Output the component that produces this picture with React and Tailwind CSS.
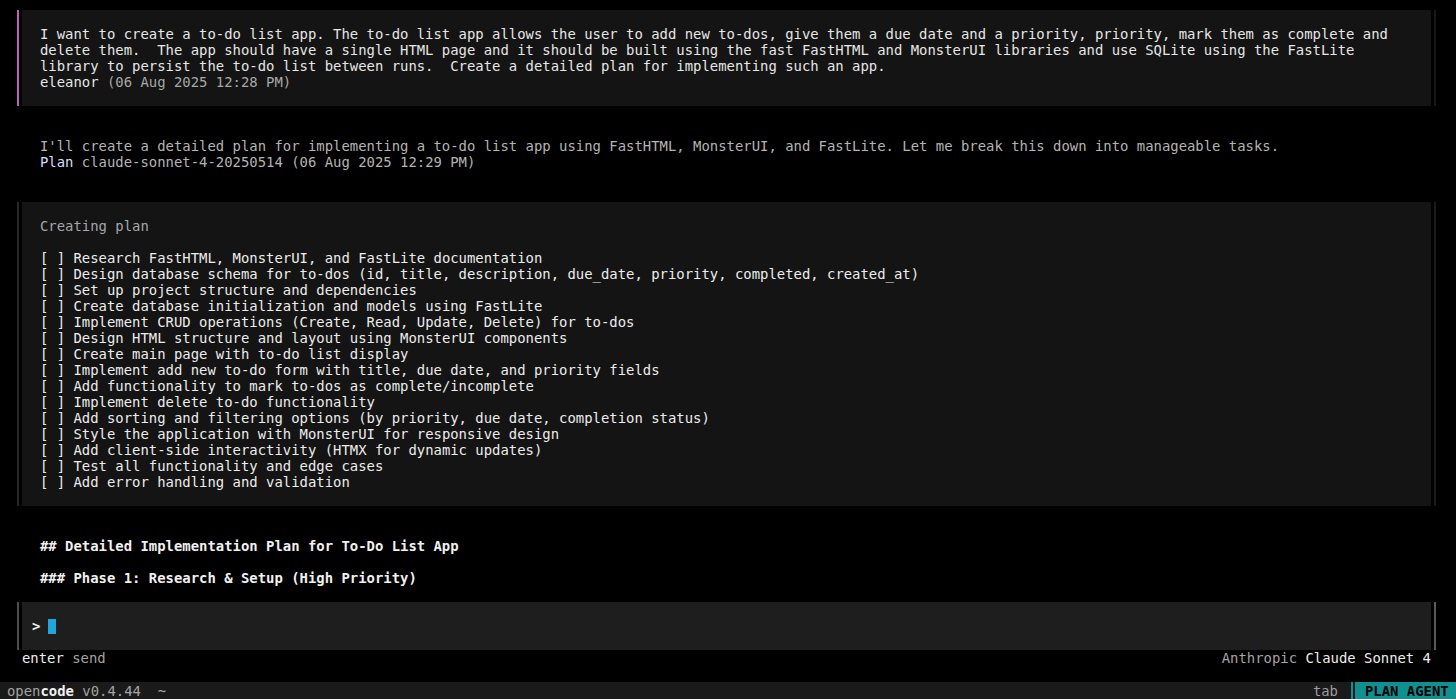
const userLines = [
  'I want to create a to-do list app. The to-do list app allows the user to add new to-dos, give them a due date and a priority, priority, mark them as complete and',
  'delete them.  The app should have a single HTML page and it should be built using the fast FastHTML and MonsterUI libraries and use SQLite using the FastLite',
  'library to persist the to-do list between runs.  Create a detailed plan for implementing such an app.',
];

const planItems = [
  'Research FastHTML, MonsterUI, and FastLite documentation',
  'Design database schema for to-dos (id, title, description, due_date, priority, completed, created_at)',
  'Set up project structure and dependencies',
  'Create database initialization and models using FastLite',
  'Implement CRUD operations (Create, Read, Update, Delete) for to-dos',
  'Design HTML structure and layout using MonsterUI components',
  'Create main page with to-do list display',
  'Implement add new to-do form with title, due date, and priority fields',
  'Add functionality to mark to-dos as complete/incomplete',
  'Implement delete to-do functionality',
  'Add sorting and filtering options (by priority, due date, completion status)',
  'Style the application with MonsterUI for responsive design',
  'Add client-side interactivity (HTMX for dynamic updates)',
  'Test all functionality and edge cases',
  'Add error handling and validation',
];

const Block = ({ edge, rail, bg, children }) => (
  <div className="flex pl-[17px] pr-[20px]">
    <div className={`w-[2px] ${edge}`} />
    <div className={`ml-[3px] flex-1 py-4 pl-[18px] ${bg}`}>{children}</div>
    <div className={`ml-[3px] w-[2px] ${rail}`} />
  </div>
);

const App = () => {
  return (
    <div
      className="flex h-[699px] w-full flex-col overflow-hidden bg-black pt-[10px] text-[13.92px] leading-[16px] text-[#e6e6e6]"
      style={{ fontFamily: '"DejaVu Sans Mono", monospace' }}
    >
      <Block edge="bg-[#c05fc0]" rail="bg-[#171717]" bg="bg-[#141414]">
        {userLines.map((line) => (
          <div key={line} className="whitespace-pre">{line}</div>
        ))}
        <div className="whitespace-pre">
          <span className="text-[#e6e6e6]">eleanor</span>
          <span className="text-[#a8a8a8]"> (06 Aug 2025 12:28 PM)</span>
        </div>
      </Block>

      <div className="mt-8 pl-[40px] text-[#b3b3b3]">
        <div className="whitespace-pre">
          I'll create a detailed plan for implementing a to-do list app using FastHTML, MonsterUI, and FastLite. Let me break this down into manageable tasks.
        </div>
        <div className="whitespace-pre">
          <span className="text-[#d3defa]">Plan</span> claude-sonnet-4-20250514 (06 Aug 2025 12:29 PM)
        </div>
      </div>

      <div className="mt-8">
        <Block edge="bg-[#262626]" rail="bg-[#1a1a1a]" bg="bg-[#141414]">
          <div className="text-[#a6a6a6]">Creating plan</div>
          <div className="h-4" />
          {planItems.map((item) => (
            <div key={item} className="whitespace-pre text-[#ececec]">
              [ ] {item}
            </div>
          ))}
        </Block>
      </div>

      <div className="mt-8 pl-[40px] font-bold text-[#f0f0f0]">
        <div className="whitespace-pre">## Detailed Implementation Plan for To-Do List App</div>
        <div className="mt-4 whitespace-pre">### Phase 1: Research &amp; Setup (High Priority)</div>
      </div>

      <div className="mt-4 flex pl-[17px] pr-[20px]">
        <div className="w-[2px] bg-[#4d4d4d]" />
        <div className="ml-[3px] flex flex-1 items-center bg-[#1e1e1e] py-4 pl-[10px]">
          <span className="w-[16px] font-bold text-[#f2f2f2]">&gt;</span>
          <span className="h-[15px] w-[8px] bg-[#22a6d9]" />
        </div>
        <div className="ml-[3px] w-[2px] bg-[#5a5a5a]" />
      </div>

      <div className="flex justify-between pl-[22px] pr-[25px]">
        <div className="whitespace-pre">
          <span className="text-[#ededed]">enter</span>
          <span className="text-[#a3a3a3]"> send</span>
        </div>
        <div className="whitespace-pre">
          <span className="text-[#a3a3a3]">Anthropic </span>
          <span className="text-[#ededed]">Claude Sonnet 4</span>
        </div>
      </div>

      <div className="mt-4 flex h-[17px] items-center bg-[#1a1a1a]">
        <div className="flex-1 whitespace-pre pl-[7px]">
          <span className="text-[#a3a3a3]">open</span>
          <span className="font-bold text-[#f0f0f0]">code</span>
          <span className="text-[#a3a3a3]"> v0.4.44  ~</span>
        </div>
        <span className="text-[#9c9c9c]">tab</span>
        <div className="ml-[13px] h-full w-[2px] bg-[#0f9191]" />
        <div className="ml-[2px] flex h-full w-[101px] items-center bg-[#0f9191] pl-[10px] font-bold text-black">
          PLAN AGENT
        </div>
      </div>
    </div>
  );
};

export default App;
